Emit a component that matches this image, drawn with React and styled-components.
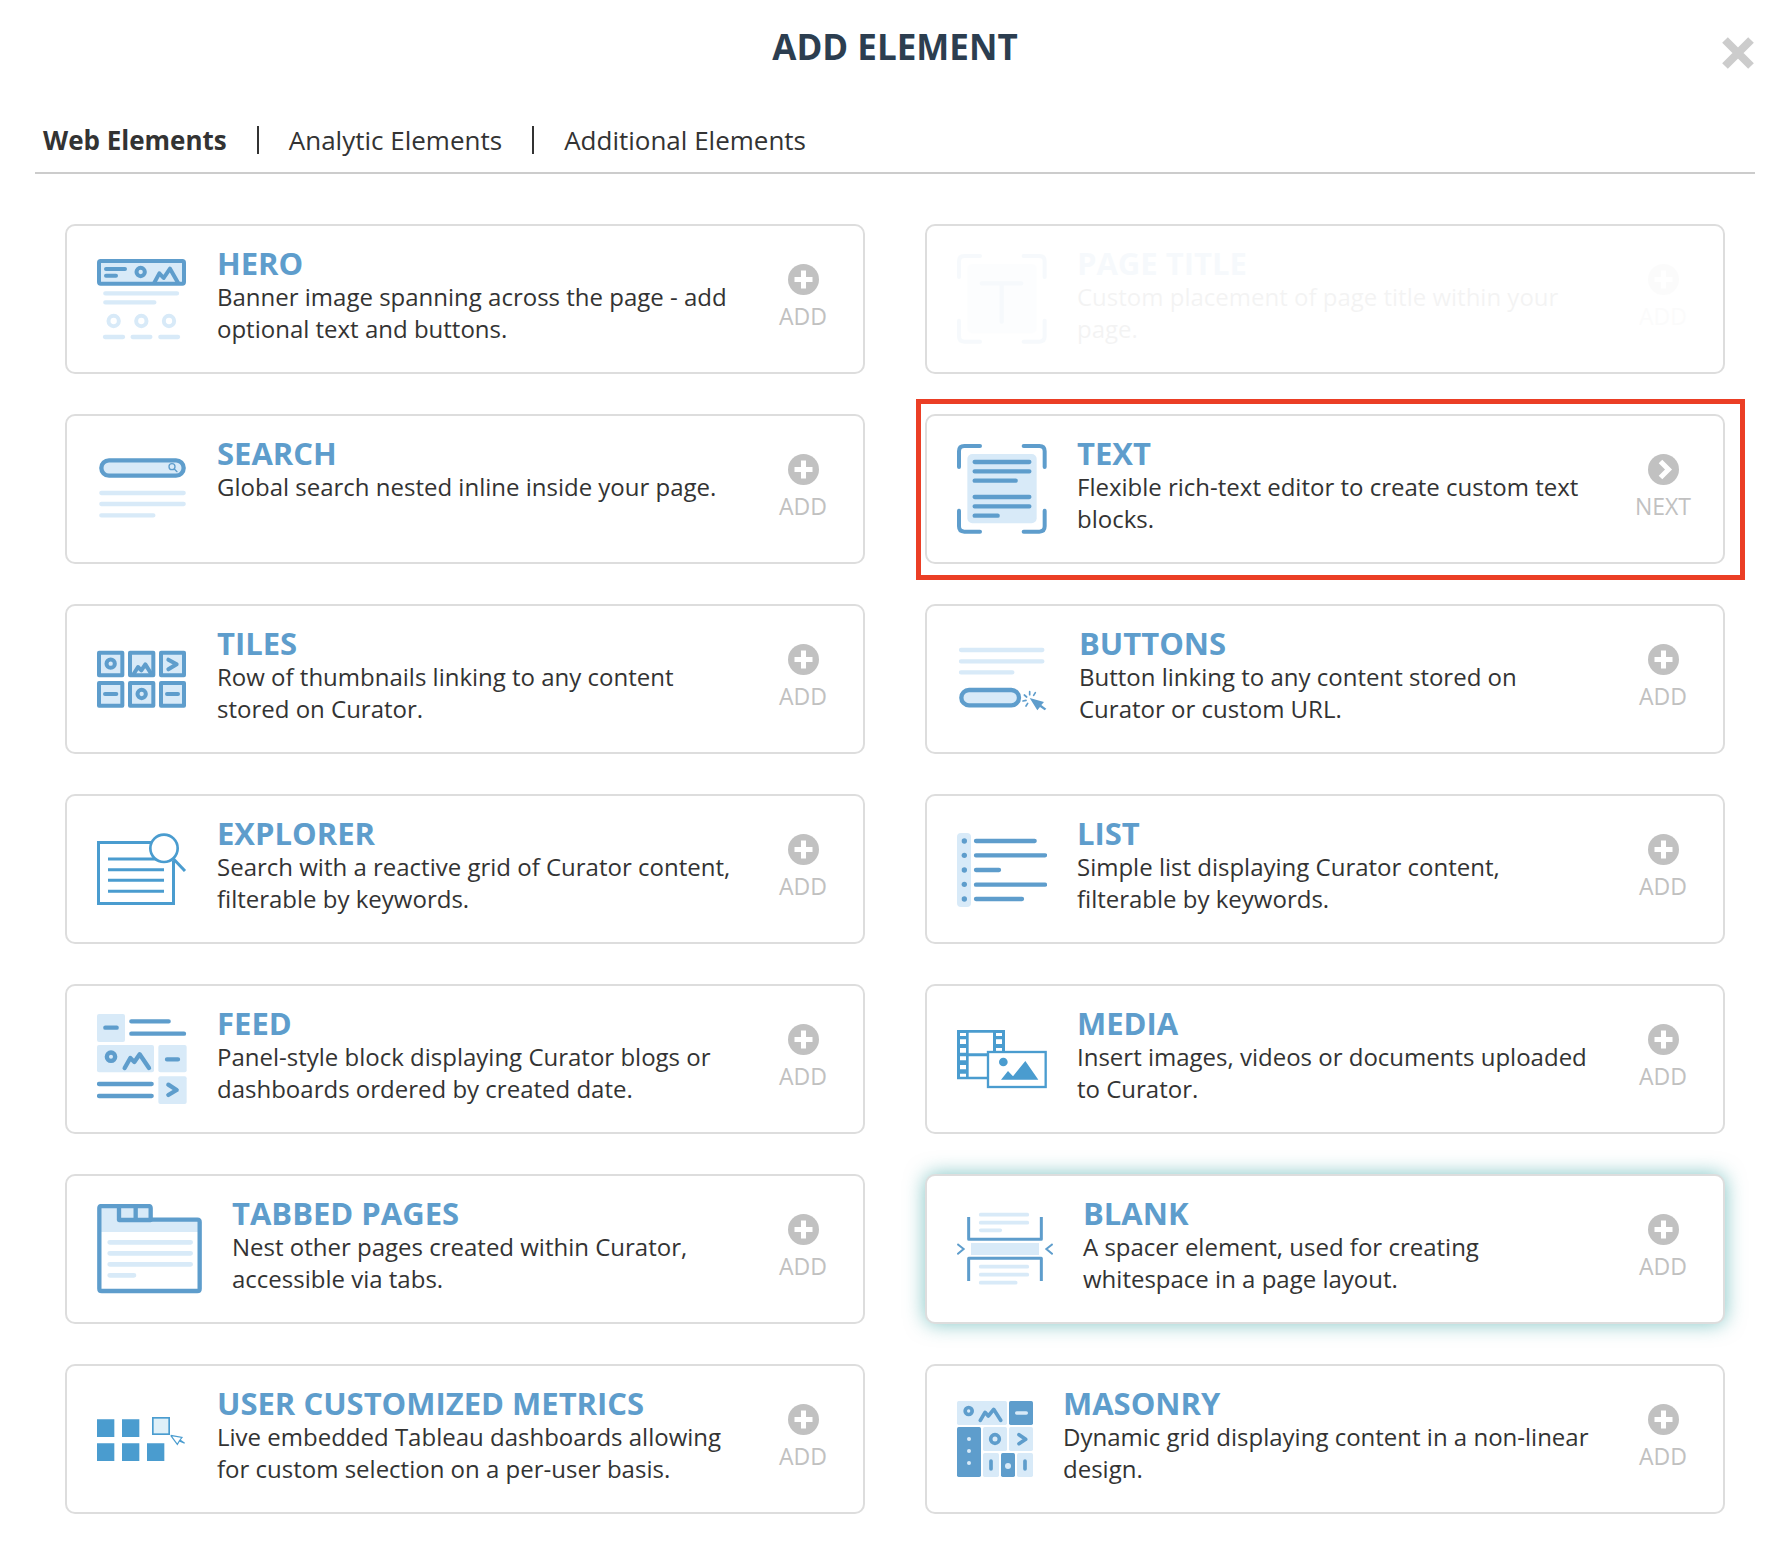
import React, { useState } from "react";
import styled, { createGlobalStyle, css } from "styled-components";

const BLUE = "#5e9dcc";
const SKY = "#4a9ccf";
const PALE = "#d8eaf8";

const GlobalStyle = createGlobalStyle`
  *, *::before, *::after { box-sizing: border-box; }
  body {
    margin: 0;
    background: #fff;
    color: #333;
    font-family: "Open Sans", "Noto Sans", sans-serif;
  }
`;

const Dialog = styled.main`
  padding: 24px 33px 40px 35px;
`;

const Header = styled.header`
  display: grid;
  grid-template-columns: 1fr auto 1fr;
  align-items: center;
  height: 58px;
`;

const DialogTitle = styled.h1`
  grid-column: 2;
  margin: 0;
  padding-bottom: 12px;
  font-size: 35px;
  line-height: 40px;
  font-weight: 700;
  color: #2c3e50;
`;

const CloseButton = styled.button`
  justify-self: end;
  display: flex;
  padding: 0;
  border: 0;
  background: none;
  color: #ccc;
  cursor: pointer;
`;

const Tabs = styled.nav`
  display: flex;
  align-items: center;
  height: 92px;
  padding: 26px 8px 0;
  border-bottom: 2px solid #ccc;
`;

const Tab = styled.button`
  display: flex;
  align-items: center;
  padding: 0;
  border: 0;
  background: none;
  color: inherit;
  font: inherit;
  font-size: 26px;
  line-height: 32px;
  font-weight: ${(p) => (p.$active ? 700 : 400)};
  cursor: pointer;

  &:not(:first-child)::before {
    content: "";
    width: 2px;
    height: 28px;
    margin: 0 30px;
    background: #333;
  }
`;

const Grid = styled.ul`
  display: grid;
  grid-template-columns: 1fr 1fr;
  gap: 40px 60px;
  margin: 0;
  padding: 50px 30px 0;
  list-style: none;
`;

const Card = styled.li`
  position: relative;
  display: flex;
  min-height: 150px;
  padding: 20px 30px;
  border: 2px solid #ddd;
  border-radius: 10px;
  background: #fff;

  ${(p) => p.$state === "disabled" && css`
    & > * { opacity: 0.05; }
  `}

  ${(p) => p.$state === "active" && css`
    box-shadow: 0 0 20px rgba(0, 139, 139, 0.5);
  `}

  ${(p) => p.$state === "outlined" && css`
    &::after {
      content: "";
      position: absolute;
      inset: -17px -22px -18px -11px;
      border: 5px solid #eb3e25;
      pointer-events: none;
    }
  `}
`;

const Picture = styled.svg`
  flex: none;
  height: 90px;
  margin: 8px 30px 0 0;
`;

const Body = styled.div`
  flex: 1;
  min-width: 0;
`;

const Name = styled.h2`
  margin: 0 0 1px;
  font-size: 31px;
  line-height: 34px;
  font-weight: 700;
  color: ${BLUE};
`;

const Description = styled.p`
  margin: 0;
  font-size: 24px;
  line-height: 32px;
`;

const Action = styled.button`
  flex: none;
  display: flex;
  flex-direction: column;
  align-items: center;
  align-self: flex-start;
  gap: 7px;
  width: 60px;
  margin-left: 34px;
  padding: 18px 0 0;
  border: 0;
  background: none;
  color: #c1c1c1;
  font: inherit;
  font-size: 23px;
  line-height: 28px;
  cursor: pointer;
`;

const stroke = (color, width) => ({
  fill: "none",
  stroke: color,
  strokeWidth: width,
  strokeLinecap: "round",
  strokeLinejoin: "round",
});

function Art({ width = 90, children }) {
  return (
    <Picture width={width} height="90" viewBox={`0 0 ${width * 3} 270`} aria-hidden="true">
      {children}
    </Picture>
  );
}

const Corners = () => (
  <path {...stroke(BLUE, 12)} d="M6 69V22Q6 6 22 6H69M200 6H247Q263 6 263 22V69M263 200V247Q263 263 247 263H200M69 263H22Q6 263 6 247V200" />
);

const HeroArt = () => (
  <Art>
    <rect x="6" y="21" width="255" height="68" rx="5" fill={PALE} stroke={BLUE} strokeWidth="12" />
    <path {...stroke(BLUE, 12)} d="M27 45H84M27 65H57" />
    <circle cx="131" cy="54" r="12.5" {...stroke(BLUE, 12)} />
    <path {...stroke(BLUE, 12)} d="M172 86L187 58L200 72L219 44L243 86" />
    <path {...stroke(PALE, 13)} d="M25 118H240M25 145H172M24 249H78M107 249H160M190 249H243" />
    <g {...stroke(PALE, 12)}>
      <circle cx="50" cy="201" r="15.5" />
      <circle cx="133" cy="201" r="15.5" />
      <circle cx="216" cy="201" r="15.5" />
    </g>
  </Art>
);

const SearchArt = () => (
  <Art>
    <rect x="13" y="49" width="247" height="46" rx="23" fill={PALE} stroke={BLUE} strokeWidth="13" />
    <circle cx="225" cy="68" r="9" {...stroke(BLUE, 4)} />
    <path {...stroke(BLUE, 4)} d="M232 75L240 83" />
    <path {...stroke(PALE, 13)} d="M13 147H260M13 180H260M13 214H169" />
  </Art>
);

const TilesArt = () => (
  <Art>
    <g fill={PALE} stroke={BLUE} strokeWidth="12" strokeLinejoin="round">
      <rect x="6" y="56" width="70" height="68" />
      <rect x="99" y="56" width="70" height="68" />
      <rect x="192" y="56" width="69" height="68" />
      <rect x="6" y="147" width="70" height="68" />
      <rect x="99" y="147" width="70" height="68" />
      <rect x="192" y="147" width="69" height="68" />
    </g>
    <g {...stroke(BLUE, 12)}>
      <circle cx="41" cy="89" r="12.5" />
      <circle cx="134" cy="180" r="12.5" />
      <path d="M110 120L123 99L133 109L145 91L163 120" />
      <path d="M214 77L239 91L214 106" />
      <path d="M24 180H58M210 180H243" />
    </g>
  </Art>
);

const ExplorerArt = () => (
  <Art>
    <rect x="4.5" y="55.5" width="225" height="183" fill="#fff" stroke={SKY} strokeWidth="9" />
    <path d="M33 105H201M33 137H201M33 169H201M33 202H201" stroke={SKY} strokeWidth="9" />
    <path d="M228 100L264 141" stroke="#fff" strokeWidth="22" />
    <path d="M229.500 110V150" stroke={SKY} strokeWidth="9" />
    <path d="M229 104L264 141" stroke={SKY} strokeWidth="9" />
    <circle cx="201" cy="73" r="41" fill="#fff" stroke={SKY} strokeWidth="8" />
  </Art>
);

const FeedArt = () => (
  <Art>
    <g fill={PALE}>
      <rect width="84" height="84" rx="6" />
      <rect y="93" width="171" height="82" rx="6" />
      <rect x="184" y="93" width="85" height="82" rx="6" />
      <rect x="184" y="187" width="85" height="83" rx="6" />
    </g>
    <g {...stroke(BLUE, 13)}>
      <path d="M25 41H59M103 22H215M103 59H261M210 136H243M6 210H164M6 246H164" />
      <circle cx="42" cy="128" r="12.5" />
      <path d="M83 162L100 132L112 144L128 121L156 162" />
      <path d="M214 212L239 228L214 243" />
    </g>
  </Art>
);

const TabbedArt = () => (
  <Art width={105}>
    <path d="M6 12Q6 6 12 6H155Q162 6 162 13V47H303Q309 47 309 53V84H6Z" fill={PALE} />
    <g {...stroke(BLUE, 13)}>
      <path d="M7 13Q7 6 14 6H154Q161 6 161 13V47H301Q308 47 308 54V254Q308 261 301 261H14Q7 261 7 254Z" />
      <path d="M66 6V48H161M116 6V48" />
    </g>
    <path {...stroke(PALE, 14)} d="M38 115H281M38 148H281M38 181H281M38 214H111" />
  </Art>
);

const MetricsArt = () => (
  <Art>
    <path fill={SKY} d="M0 76h52v53H0zM75 76h52v53H75zM0 148h52v53H0zM75 148h52v53H75zM150 148h52v53H150z" />
    <rect x="167.500" y="71.500" width="49" height="49" fill="#dff0f8" stroke={SKY} strokeWidth="5" />
    <path d="M221 124L255 130L249 138L263 148M263 148L247 141L241 151L221 124" fill="none" stroke={SKY} strokeWidth="3.500" />
  </Art>
);

const PageTitleArt = () => (
  <Art>
    <Corners />
    <rect x="31" y="30" width="208" height="208" rx="15" fill={PALE} />
    <path {...stroke(BLUE, 13)} d="M74 88H193M134 88V203" />
  </Art>
);

const TextArt = () => (
  <Art>
    <Corners />
    <rect x="31" y="30" width="208" height="208" rx="15" fill={PALE} />
    <path {...stroke(BLUE, 13)} d="M53 54H217M53 82H217M53 110H176M53 159H217M53 187H217M53 215H122" />
  </Art>
);

const ButtonsArt = () => (
  <Art width={92}>
    <path {...stroke(PALE, 13)} d="M12 48H256M12 82H256M12 115H166" />
    <rect x="13" y="168" width="173" height="46" rx="23" fill={PALE} stroke={BLUE} strokeWidth="13" />
    <path {...stroke(BLUE, 5)} d="M218 173V182M235 176L230 184M202 183L209 189M198 201L207 199M212 208L207 216" />
    <path fill={BLUE} d="M218 192L261 204L253 213L268 224L263 229L249 219L241 229Z" />
  </Art>
);

const ListArt = () => (
  <Art>
    <rect y="27" width="42" height="222" rx="12" fill={PALE} />
    <g fill={BLUE}>
      {[51, 94, 138, 181, 225].map((y) => <circle key={y} cx="22" cy={y} r="8" />)}
    </g>
    <path {...stroke(BLUE, 13)} d="M57 51H233M57 94H264M57 138H126M57 182H264M57 225H195" />
  </Art>
);

const MediaArt = () => (
  <Art>
    <path fill={SKY} d="M0 48H144V196H0Z" />
    <path fill="#fff" d="M35 56h73v62H35zM35 127h73v61H35zM9 57h18v9H9zM9 76h18v14H9zM9 102h18v14H9zM9 127h18v12H9zM9 153h18v13H9zM9 179h18v9H9zM117 57h18v9h-18zM117 76h18v14h-18zM117 102h18v14h-18z" />
    <rect x="93" y="114" width="173" height="105" fill="#fff" stroke={SKY} strokeWidth="7" />
    <circle cx="139" cy="144" r="13" fill={SKY} />
    <path fill={SKY} d="M132 197L153 171L168 187L205 141L244 197Z" />
  </Art>
);

const BlankArt = () => (
  <Art width={96}>
    <path {...stroke(PALE, 11)} d="M71 32H211M71 56H211M71 79H130M71 188H211M71 212H211M71 236H176" />
    <rect x="42" y="117" width="204" height="36" fill={PALE} />
    <g fill="none" stroke={BLUE} strokeWidth="9" strokeLinejoin="round">
      <path d="M35 39V106H253V39M35 231V163H253V231" />
    </g>
    <path fill="none" stroke={BLUE} strokeWidth="6" d="M1 120L20 135L1 151M287 120L268 135L287 151" />
  </Art>
);

const MasonryArt = () => (
  <Art width={76}>
    <g fill={PALE}>
      <rect y="21" width="150" height="72" rx="5" />
      <rect x="78" y="99" width="72" height="72" rx="5" />
      <rect x="156" y="99" width="72" height="72" rx="5" />
      <rect x="78" y="177" width="48" height="72" rx="5" />
      <rect x="180" y="177" width="48" height="72" rx="5" />
    </g>
    <g fill={BLUE}>
      <rect x="156" y="21" width="72" height="72" rx="5" />
      <rect y="99" width="72" height="150" rx="5" />
      <rect x="132" y="177" width="42" height="72" rx="5" />
    </g>
    <g {...stroke(BLUE, 11)}>
      <circle cx="35" cy="51" r="10.500" />
      <circle cx="114" cy="135" r="13" />
      <path d="M70 79L84 55L94 66L110 46L131 79M186 122L206 136L186 149M102 201V225M204 201V225" />
    </g>
    <path {...stroke(PALE, 10)} d="M179 57H208" />
    <g fill={PALE}>
      <circle cx="36" cy="135" r="6" />
      <circle cx="36" cy="171" r="6" />
      <circle cx="36" cy="207" r="6" />
      <circle cx="153" cy="216" r="9" />
    </g>
  </Art>
);

const PlusCircle = () => (
  <svg width="31" height="31" viewBox="0 0 31 31" aria-hidden="true">
    <circle cx="15.500" cy="15.500" r="15.500" fill="currentColor" />
    <path d="M15.500 9V22M9 15.500H22" stroke="#fff" strokeWidth="5" strokeLinecap="square" strokeLinejoin="round" />
  </svg>
);

const NextCircle = () => (
  <svg width="31" height="31" viewBox="0 0 31 31" aria-hidden="true">
    <circle cx="15.500" cy="15.500" r="15.500" fill="currentColor" />
    <path d="M12.500 7.500L20.500 15.500L12.500 23.500" fill="none" stroke="#fff" strokeWidth="5" />
  </svg>
);

const elements = [
  { name: "HERO", art: HeroArt, text: "Banner image spanning across the page - add optional text and buttons." },
  { name: "PAGE TITLE", art: PageTitleArt, text: "Custom placement of page title within your page.", state: "disabled" },
  { name: "SEARCH", art: SearchArt, text: "Global search nested inline inside your page." },
  { name: "TEXT", art: TextArt, text: "Flexible rich-text editor to create custom text blocks.", state: "outlined", next: true },
  { name: "TILES", art: TilesArt, text: "Row of thumbnails linking to any content stored on Curator." },
  { name: "BUTTONS", art: ButtonsArt, text: "Button linking to any content stored on Curator or custom URL." },
  { name: "EXPLORER", art: ExplorerArt, text: "Search with a reactive grid of Curator content, filterable by keywords." },
  { name: "LIST", art: ListArt, text: "Simple list displaying Curator content, filterable by keywords." },
  { name: "FEED", art: FeedArt, text: "Panel-style block displaying Curator blogs or dashboards ordered by created date." },
  { name: "MEDIA", art: MediaArt, text: "Insert images, videos or documents uploaded to Curator." },
  { name: "TABBED PAGES", art: TabbedArt, text: "Nest other pages created within Curator, accessible via tabs." },
  { name: "BLANK", art: BlankArt, text: "A spacer element, used for creating whitespace in a page layout.", state: "active" },
  { name: "USER CUSTOMIZED METRICS", art: MetricsArt, text: "Live embedded Tableau dashboards allowing for custom selection on a per-user basis." },
  { name: "MASONRY", art: MasonryArt, text: "Dynamic grid displaying content in a non-linear design." },
];

const tabs = ["Web Elements", "Analytic Elements", "Additional Elements"];

export default function App() {
  const [active, setActive] = useState(tabs[0]);
  return (
    <>
      <GlobalStyle />
      <Dialog>
        <Header>
          <DialogTitle>ADD ELEMENT</DialogTitle>
          <CloseButton type="button" aria-label="Close">
            <svg width="34" height="34" viewBox="0 0 34 34" aria-hidden="true">
              <path d="M4 4L30 30M30 4L4 30" stroke="currentColor" strokeWidth="8" />
            </svg>
          </CloseButton>
        </Header>
        <Tabs>
          {tabs.map((tab) => (
            <Tab key={tab} type="button" $active={tab === active} onClick={() => setActive(tab)}>
              {tab}
            </Tab>
          ))}
        </Tabs>
        <Grid>
          {elements.map(({ name, art: ElementArt, text, state, next }) => (
            <Card key={name} $state={state}>
              <ElementArt />
              <Body>
                <Name>{name}</Name>
                <Description>{text}</Description>
              </Body>
              <Action type="button" disabled={state === "disabled"}>
                {next ? <NextCircle /> : <PlusCircle />}
                {next ? "NEXT" : "ADD"}
              </Action>
            </Card>
          ))}
        </Grid>
      </Dialog>
    </>
  );
}
